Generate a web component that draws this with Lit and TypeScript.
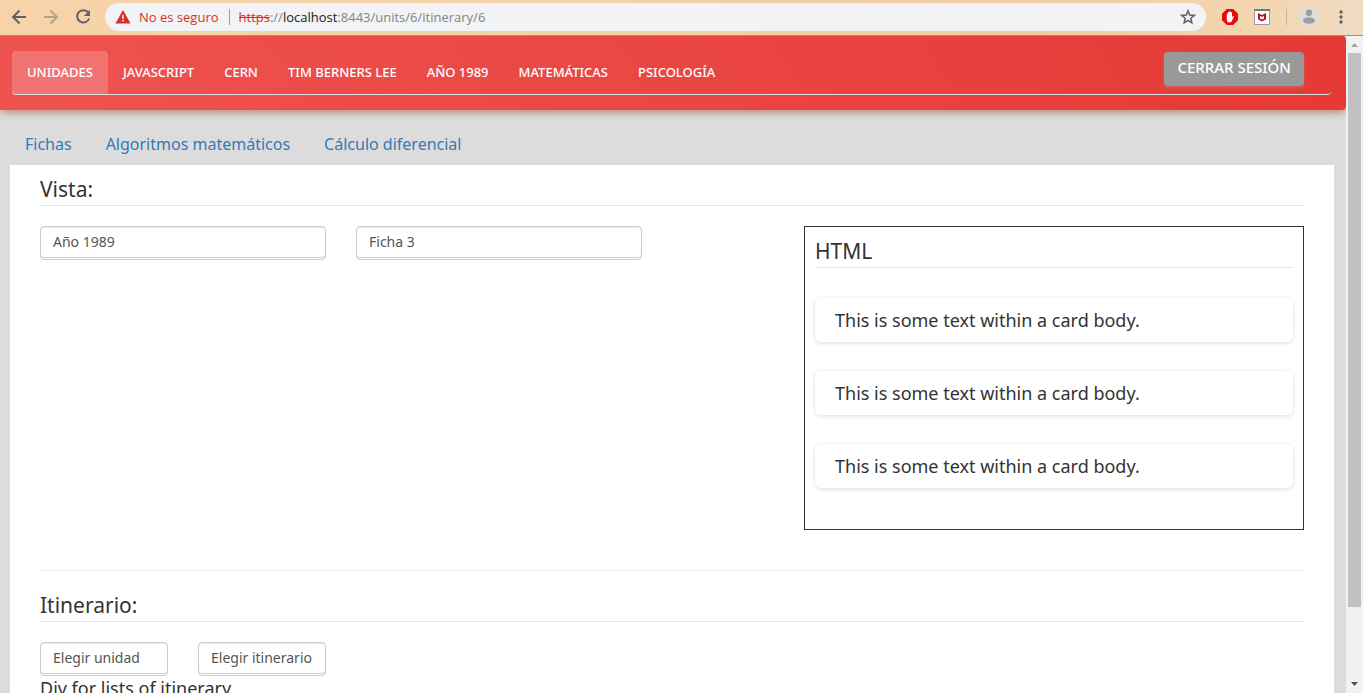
import { LitElement, html, css } from "lit";
import { customElement, property } from "lit/decorators.js";

@customElement("browser-bar")
class BrowserBar extends LitElement {
  static styles = css`
    :host {
      display: flex;
      align-items: center;
      height: 33px;
      padding: 0 20px 2px 7px;
      background: linear-gradient(90deg, #f6d3a8, #f4d2a6 40%, #f0cca0 75%, #f3d5ae 92%, #efdcc2);
      border-bottom: 1px solid #a8906e;
      font: 13px "Open Sans", sans-serif;
    }
    button {
      display: flex;
      align-items: center;
      justify-content: center;
      padding: 0;
      border: 0;
      background: none;
      flex: none;
      width: 24px;
      height: 24px;
    }
    svg { display: block; }
    .nav { display: flex; gap: 8px; }
    .address {
      display: flex;
      align-items: center;
      flex: 1;
      min-width: 0;
      height: 28px;
      margin: 0 12px 0 10px;
      padding: 0 6px 0 10px;
      border-radius: 14px;
      background: #f1f3f4;
    }
    .warn { color: #d93025; margin-left: 8px; }
    .sep { width: 1px; height: 16px; background: #9aa0a6; margin: 0 9px 0 10px; }
    .url { flex: 1; color: #80868b; white-space: nowrap; overflow: hidden; }
    .scheme { color: #d93025; text-decoration: line-through; }
    .domain { color: #202124; }
    .tools { display: flex; align-items: center; gap: 8px; }
    .rule { width: 1px; height: 16px; background: #cbb28e; margin: 0 2px 0 4px; }
    .menu { width: 4px; margin: 0 0 0 10px; }
  `;
  render() {
    return html`
      <div class="nav">
        <button aria-label="Atrás">
          <svg width="16" height="16" viewBox="0 0 16 16" fill="none" stroke="#5f6368" stroke-width="2"><path d="M15 8H2M8.500 1.500 2 8l6.500 6.500" /></svg>
        </button>
        <button aria-label="Adelante">
          <svg width="16" height="16" viewBox="0 0 16 16" fill="none" stroke="#b6a287" stroke-width="2"><path d="M1 8h13M7.500 1.500 14 8l-6.500 6.500" /></svg>
        </button>
        <button aria-label="Recargar">
          <svg width="16" height="16" viewBox="0 0 16 16"><path d="M13 3.200A6.200 6.200 0 1 0 14.200 9.500" fill="none" stroke="#5f6368" stroke-width="2" /><path d="M15 .8V7H8.800z" fill="#5f6368" /></svg>
        </button>
      </div>
      <div class="address">
        <svg width="16" height="14" viewBox="0 0 16 14"><path d="M8 0l7.500 13.500H.5z" fill="#d93025" /><path d="M7.200 5h1.600v4H7.200zM7.200 10h1.600v1.600H7.200z" fill="#f1f3f4" /></svg>
        <span class="warn">No es seguro</span>
        <span class="sep"></span>
        <span class="url"><span class="scheme">https</span>://<span class="domain">localhost</span>:8443/units/6/itinerary/6</span>
        <button aria-label="Marcador">
          <svg width="16" height="16" viewBox="0 0 16 16"><path d="M8 1.800l1.700 4.300 4.600.3-3.500 3 1.100 4.500L8 11.400l-3.900 2.500 1.100-4.500-3.500-3 4.600-.3z" fill="none" stroke="#5f6368" stroke-width="1.500" /></svg>
        </button>
      </div>
      <div class="tools">
        <button aria-label="Bloqueador">
          <svg width="16" height="16" viewBox="0 0 16 16"><path d="M4.800 0h6.400L16 4.800v6.400L11.200 16H4.800L0 11.200V4.800z" fill="#e40d0d" /><path d="M4.800 8.300V4.800q.6-.7 1.200 0V3.200q.7-.8 1.300 0v-.6q.7-.8 1.400 0v.9q.7-.7 1.300 0v4.800q1-1.500 1.900-1.100-.6 1.300-1.300 3-.9 3.300-3.200 3.300-2.700 0-2.600-3.500z" fill="#fff" /></svg>
        </button>
        <button aria-label="Protección">
          <svg width="16" height="16" viewBox="0 0 16 16"><path d="M.5.500h15v15H.5z" fill="#fff" stroke="#9a9a9a" /><path d="M0 0h16v2H0z" fill="#64808c" /><path d="M4 4l3 1.500 1 .8 1-.8L12 4v6.300L8 12.500l-4-2.200zm2 2.800V9.400l2 1 2-1V6.800L8 8z" fill="#b8131f" fill-rule="evenodd" /></svg>
        </button>
        <span class="rule"></span>
        <button aria-label="Perfil">
          <svg width="20" height="20" viewBox="0 0 20 20"><circle cx="10" cy="10" r="10" fill="#dedede" /><circle cx="10" cy="5.800" r="3.200" fill="#9e9e9e" /><ellipse cx="10" cy="13.500" rx="6" ry="3.200" fill="#9e9e9e" /></svg>
        </button>
        <button class="menu" aria-label="Menú">
          <svg width="4" height="14" viewBox="0 0 4 14" fill="#5f6368"><circle cx="2" cy="2" r="1.700" /><circle cx="2" cy="7" r="1.700" /><circle cx="2" cy="12" r="1.700" /></svg>
        </button>
      </div>
    `;
  }
}

@customElement("scroll-track")
class ScrollTrack extends LitElement {
  static styles = css`
    :host {
      display: flex;
      flex-direction: column;
      align-items: center;
      flex: none;
      width: 17px;
      background: #f1f1f1;
    }
    svg { display: block; flex: none; }
    .track { flex: 1; width: 13px; }
    .thumb { height: 89%; background: #c1c1c1; }
  `;
  render() {
    return html`
      <svg width="17" height="17" viewBox="0 0 17 17"><path d="M5 11h7L8.500 7z" fill="#a3a3a3" /></svg>
      <div class="track"><div class="thumb"></div></div>
      <svg width="17" height="17" viewBox="0 0 17 17"><path d="M5 6h7l-3.500 4z" fill="#505050" /></svg>
    `;
  }
}

@customElement("picker-field")
class PickerField extends LitElement {
  @property() label = "";
  @property() value = "";
  static styles = css`
    :host { display: block; min-width: 0; }
    select {
      display: block;
      appearance: none;
      box-sizing: border-box;
      width: 100%;
      height: 34px;
      margin: 0;
      padding: 0 12px 4px;
      border: 1px solid #ccc;
      border-radius: 4px;
      background: #fff;
      box-shadow: inset 0 -1px #fff, inset 0 -2px #ccc, inset 0 1px 1px rgba(0, 0, 0, 0.08);
      color: #555;
      font: 14px "Noto Sans", sans-serif;
    }
  `;
  render() {
    return html`<select aria-label=${this.label}><option>${this.value}</option></select>`;
  }
}

@customElement("app-root")
class AppRoot extends LitElement {
  private units = ["Unidades", "JavaScript", "CERN", "Tim Berners Lee", "Año 1989", "Matemáticas", "Psicología"];
  private sections = ["Fichas", "Algoritmos matemáticos", "Cálculo diferencial"];
  private cards = [1, 2, 3];

  static styles = css`
    :host {
      display: flex;
      flex-direction: column;
      height: 100vh;
      overflow: hidden;
      color: #333;
      font: 18px/24px "Noto Sans", sans-serif;
    }
    browser-bar { flex: none; }
    .viewport { display: flex; flex: 1; min-height: 0; }
    .page {
      flex: 1;
      min-width: 0;
      overflow: hidden;
      background: #dcdcdc;
    }
    .top {
      padding: 15px 15px 15px 12px;
      border-radius: 0 4px 4px 0;
      background: linear-gradient(60deg, #ef5350, #e53935);
      box-shadow: 0 4px 12px -2px rgba(0, 0, 0, 0.2), 0 2px 6px rgba(244, 67, 54, 0.4);
    }
    .tabs {
      display: flex;
      align-items: flex-start;
      border-bottom: 1px solid #ddd;
      border-radius: 4px;
    }
    .tab {
      padding: 11px 15px 12px;
      border-radius: 4px 4px 0 0;
      color: #fff;
      font-size: 13px;
      font-weight: 500;
      line-height: 20px;
      text-transform: uppercase;
      text-decoration: none;
      white-space: nowrap;
    }
    .tab.active { background: rgba(255, 255, 255, 0.2); }
    .logout {
      margin: 1px 27px 0 auto;
      height: 34px;
      padding: 0 13px 4px;
      border: 0;
      border-radius: 4px;
      background: #999;
      box-shadow: 0 2px 3px rgba(153, 153, 153, 0.4);
      color: #fff;
      font: 500 15px "Noto Sans", sans-serif;
      text-transform: uppercase;
      white-space: nowrap;
    }
    .links {
      display: flex;
      gap: 34px;
      padding: 22px 25px 9px;
    }
    .links a {
      color: #337ab7;
      font-size: 16px;
      text-decoration: none;
    }
    .panel {
      margin: 0 12px 0 10px;
      padding: 10px 30px 0;
      background: #fff;
    }
    h2 {
      margin: 0 0 20px;
      padding-bottom: 2px;
      border-bottom: 1px solid #e5e5e5;
      font-size: 21px;
      font-weight: 400;
      line-height: 28px;
    }
    .view { display: flex; justify-content: space-between; align-items: flex-start; gap: 30px; }
    .fields {
      display: grid;
      grid-template-columns: 1fr 1fr;
      column-gap: 30px;
      width: 602px;
    }
    .fields.small { width: 286px; }
    .preview {
      box-sizing: border-box;
      width: 500px;
      padding: 10px 10px 41px;
      border: 1px solid #333;
    }
    .preview h2 { margin-bottom: 30px; }
    .cards { display: grid; gap: 29px; }
    .card {
      padding: 10px 20px;
      border-radius: 6px;
      box-shadow: 0 1px 4px rgba(0, 0, 0, 0.14);
    }
    hr {
      margin: 40px 0 20px;
      border: 0;
      border-top: 1px solid #eee;
    }
    p { margin: 0; }
  `;

  render() {
    return html`
      <browser-bar></browser-bar>
      <div class="viewport">
        <div class="page">
          <header class="top">
            <nav class="tabs">
              ${this.units.map((u, i) => html`<a href="#" class="tab ${i === 0 ? "active" : ""}">${u}</a>`)}
              <button class="logout">Cerrar sesión</button>
            </nav>
          </header>
          <nav class="links">${this.sections.map((s) => html`<a href="#">${s}</a>`)}</nav>
          <main class="panel">
            <h2>Vista:</h2>
            <div class="view">
              <div class="fields">
                <picker-field label="Unidad" value="Año 1989"></picker-field>
                <picker-field label="Ficha" value="Ficha 3"></picker-field>
              </div>
              <section class="preview">
                <h2>HTML</h2>
                <div class="cards">
                  ${this.cards.map(() => html`<div class="card">This is some text within a card body.</div>`)}
                </div>
              </section>
            </div>
            <hr />
            <h2>Itinerario:</h2>
            <div class="fields small">
              <picker-field label="Unidad" value="Elegir unidad"></picker-field>
              <picker-field label="Itinerario" value="Elegir itinerario"></picker-field>
            </div>
            <p>Div for lists of itinerary</p>
          </main>
        </div>
        <scroll-track></scroll-track>
      </div>
    `;
  }
}
